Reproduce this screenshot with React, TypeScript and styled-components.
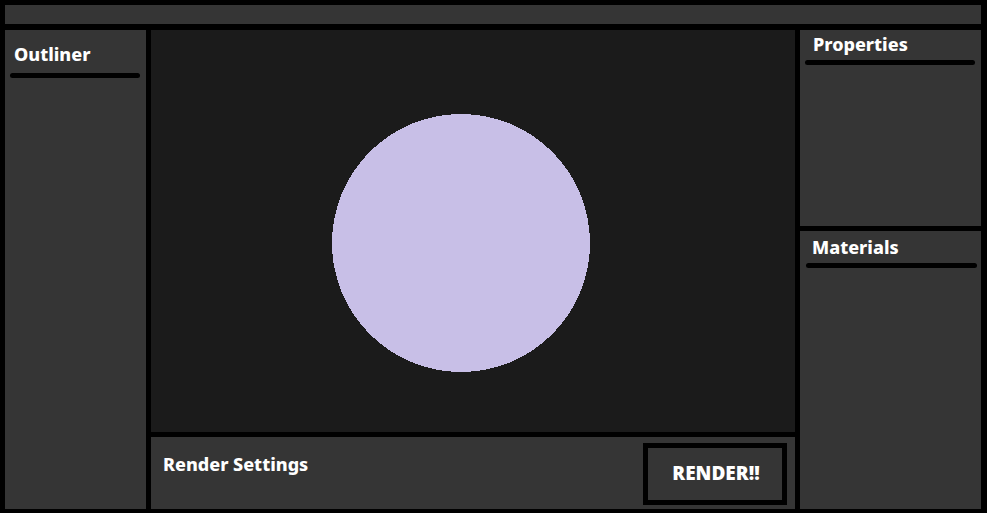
import React from "react";
import styled, { createGlobalStyle } from "styled-components";

const GlobalStyle = createGlobalStyle`
  * { box-sizing: border-box; }
  body { margin: 0; background: #000; }
`;

const Shell = styled.div`
  display: grid;
  grid-template-rows: 19px minmax(0, 1fr);
  gap: 6px;
  min-height: 100vh;
  padding: 5px 6px 4px 5px;
  background: #000;
  color: #fff;
  font-family: "Noto Sans", "Open Sans", sans-serif;
`;

const TopBar = styled.header`
  background: #353535;
`;

const Workspace = styled.div`
  display: grid;
  grid-template-columns: 141px minmax(0, 1fr) 181px;
  gap: 5px;
`;

const Panel = styled.section<{ $inset: string }>`
  background: #353535;
  padding: ${(p) => p.$inset};
`;

const Title = styled.h2`
  margin: 0;
  font-size: 18px;
  line-height: 24px;
  font-weight: 850;
`;

const PanelTitle = styled(Title)<{ $inset: string }>`
  padding: ${(p) => p.$inset};
`;

const Rule = styled.hr`
  height: 5px;
  margin: 0;
  border: 0;
  border-radius: 3px;
  background: #000;
`;

const Center = styled.main`
  display: grid;
  grid-template-rows: minmax(0, 1fr) 72px;
  gap: 5px;
`;

const Viewport = styled.section`
  display: flex;
  align-items: center;
  justify-content: center;
  padding: 24px 24px 0 0;
  background: #1b1b1b;
`;

const Sphere = styled.svg`
  width: 258px;
  height: 258px;
`;

const RenderBar = styled.section`
  display: flex;
  align-items: center;
  justify-content: space-between;
  padding: 2px 8px 0 12px;
  background: #353535;
`;

const RenderTitle = styled(Title)`
  padding-bottom: 20px;
`;

const RenderButton = styled.button`
  width: 144px;
  height: 62px;
  padding: 0 0 2px 2px;
  border: 5px solid #000;
  background: #353535;
  color: #fff;
  font: 800 19px/24px "Open Sans", "Noto Sans", sans-serif;
  cursor: pointer;
`;

const Sidebar = styled.aside`
  display: grid;
  grid-template-rows: 196px minmax(0, 1fr);
  gap: 5px;
`;

export default function App() {
  return (
    <>
      <GlobalStyle />
      <Shell>
        <TopBar />
        <Workspace>
          <Panel $inset="12px 6px 0 5px">
            <PanelTitle $inset="0 4px 7px">Outliner</PanelTitle>
            <Rule />
          </Panel>
          <Center>
            <Viewport>
              <Sphere viewBox="0 0 258 258" role="img" aria-label="Sphere">
                <circle cx="129" cy="129" r="129" fill="#c8bfe7" shapeRendering="crispEdges" />
              </Sphere>
            </Viewport>
            <RenderBar>
              <RenderTitle>Render Settings</RenderTitle>
              <RenderButton type="button">RENDER!!</RenderButton>
            </RenderBar>
          </Center>
          <Sidebar>
            <Panel $inset="2px 6px 0 5px">
              <PanelTitle $inset="0 8px 4px">Properties</PanelTitle>
              <Rule />
            </Panel>
            <Panel $inset="4px 4px 0 6px">
              <PanelTitle $inset="0 6px 4px">Materials</PanelTitle>
              <Rule />
            </Panel>
          </Sidebar>
        </Workspace>
      </Shell>
    </>
  );
}
